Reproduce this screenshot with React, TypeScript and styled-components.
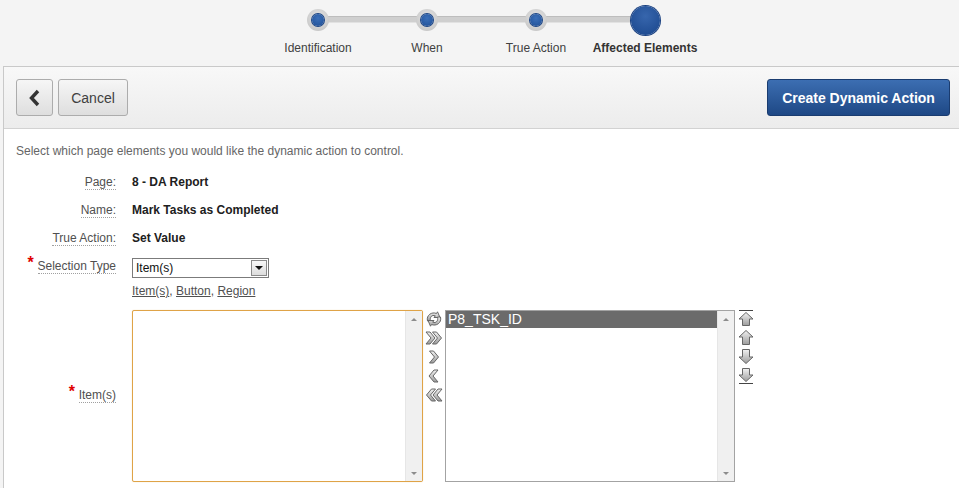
import React from "react";
import styled, { createGlobalStyle } from "styled-components";

const Global = createGlobalStyle`
  html, body { margin: 0; padding: 0; }
  body {
    background: #f4f4f4;
    font-family: "Liberation Sans", Arial, sans-serif;
    overflow: hidden;
    width: 959px;
    height: 488px;
  }
`;

const Page = styled.div`
  display: flex;
  flex-direction: column;
  width: 959px;
  height: 488px;
`;

const Wizard = styled.div`
  height: 66px;
  display: flex;
  justify-content: center;
  padding-left: 4px;
  box-sizing: border-box;
`;

const Steps = styled.div`
  position: relative;
  display: flex;
  padding-top: 5px;
`;

const Track = styled.div`
  position: absolute;
  left: 54px;
  right: 54px;
  top: 16px;
  height: 5px;
  background: #cfcfcf;
  border-top: 1px solid #bdbdbd;
  border-bottom: 1px solid #e2e2e2;
`;

const Step = styled.div`
  position: relative;
  width: 109px;
  display: flex;
  flex-direction: column;
  align-items: center;
`;

const DotHolder = styled.div`
  height: 30px;
  display: flex;
  align-items: center;
  justify-content: center;
`;

const SmallDot = styled.div`
  width: 22px;
  height: 22px;
  border-radius: 50%;
  background: radial-gradient(circle at 50% 40%, #e6e6e6 0%, #cbcbcb 70%, #bcbcbc 100%);
  display: flex;
  align-items: center;
  justify-content: center;
  &::after {
    content: "";
    width: 12px;
    height: 12px;
    border-radius: 50%;
    background: radial-gradient(circle at 50% 35%, #3b6fb8, #1f4f96);
    box-shadow: 0 0 0 1px #1b4485;
  }
`;

const BigDot = styled.div`
  width: 29px;
  height: 29px;
  border-radius: 50%;
  background: radial-gradient(circle at 50% 35%, #3766ad, #1f4c92 80%);
  box-shadow: 0 0 0 1px #1a4080;
`;

const StepLabel = styled.div<{ $active?: boolean }>`
  margin-top: 6px;
  font-size: 12px;
  color: ${(p) => (p.$active ? "#333" : "#404040")};
  font-weight: ${(p) => (p.$active ? "bold" : "normal")};
  white-space: nowrap;
`;

const Panel = styled.div`
  flex: 1;
  margin-left: 3px;
  border-left: 1px solid #c9c9c9;
  border-top: 1px solid #c9c9c9;
  background: #fff;
  display: flex;
  flex-direction: column;
`;

const Header = styled.div`
  height: 62px;
  box-sizing: border-box;
  background: linear-gradient(#f8f8f8, #ececec);
  border-bottom: 1px solid #d2d2d2;
  display: flex;
  align-items: center;
  padding: 0 9px 0 12px;
  gap: 5px;
`;

const GrayButton = styled.button<{ $w: number }>`
  height: 37px;
  width: ${(p) => p.$w}px;
  box-sizing: border-box;
  border: 1px solid #acacac;
  border-radius: 3px;
  background: linear-gradient(#f6f6f6, #dedede);
  font-family: "Liberation Sans", Arial, sans-serif;
  font-size: 14px;
  color: #404040;
  padding: 0;
  display: flex;
  align-items: center;
  justify-content: center;
`;

const Spacer = styled.div`
  flex: 1;
`;

const PrimaryButton = styled.button`
  height: 37px;
  width: 183px;
  box-sizing: border-box;
  border: 1px solid #1a3c70;
  border-radius: 3px;
  background: linear-gradient(#3c6eb2, #1e4885);
  color: #fff;
  font-family: "Liberation Sans", Arial, sans-serif;
  font-size: 14px;
  font-weight: bold;
  padding: 0;
`;

const Body = styled.div`
  padding: 15px 12px 0 12px;
`;

const Intro = styled.div`
  font-size: 12px;
  color: #666;
  line-height: 14px;
`;

const Form = styled.div`
  margin-top: 18px;
  display: grid;
  grid-template-columns: 100px auto;
  column-gap: 16px;
  align-items: start;
`;

const LabelCell = styled.div<{ $h?: number; $center?: boolean }>`
  height: ${(p) => p.$h ?? 28}px;
  display: flex;
  justify-content: flex-end;
  align-items: ${(p) => (p.$center ? "center" : "flex-start")};
`;

const Label = styled.span`
  position: relative;
  font-size: 12px;
  color: #505050;
  line-height: 13px;
  border-bottom: 1px dotted #a0a0a0;
`;

const Star = styled.span`
  position: absolute;
  left: -10px;
  top: -4px;
  color: #e00000;
  font-size: 16px;
  font-weight: bold;
`;

const Value = styled.div`
  height: 28px;
  font-size: 12px;
  font-weight: bold;
  color: #202020;
  line-height: 13px;
`;

const SelectCell = styled.div`
  height: 52px;
  margin-top: -2px;
  display: flex;
  flex-direction: column;
  gap: 6px;
`;

const SelectBox = styled.div`
  width: 137px;
  height: 20px;
  box-sizing: border-box;
  border: 1px solid #7b7b7b;
  background: #fff;
  display: flex;
  align-items: center;
  justify-content: space-between;
  padding: 0 1px 0 3px;
  font-size: 12px;
  color: #111;
`;

const DropBtn = styled.div`
  width: 16px;
  height: 16px;
  box-sizing: border-box;
  border: 1px solid #8a8a8a;
  background: linear-gradient(#f8f8f8, #dcdcdc);
  display: flex;
  align-items: center;
  justify-content: center;
  &::after {
    content: "";
    border-left: 4px solid transparent;
    border-right: 4px solid transparent;
    border-top: 4px solid #111;
  }
`;

const Links = styled.div`
  font-size: 12px;
  color: #505050;
  & a {
    color: #505050;
    text-decoration: underline;
  }
`;

const Shuttle = styled.div`
  display: flex;
  align-items: flex-start;
  gap: 2px;
`;

const ListBox = styled.div<{ $focus?: boolean }>`
  width: ${(p) => (p.$focus ? 291 : 290)}px;
  height: 172px;
  box-sizing: border-box;
  border: 1px solid ${(p) => (p.$focus ? "#dfa347" : "#a3a3a3")};
  border-radius: ${(p) => (p.$focus ? 2 : 0)}px;
  box-shadow: ${(p) => (p.$focus ? "0 0 1px #eccb8f" : "none")};
  background: #fff;
  display: flex;
`;

const Options = styled.div`
  flex: 1;
`;

const Option = styled.div<{ $sel?: boolean }>`
  height: 17px;
  line-height: 17px;
  padding-left: 2px;
  font-size: 14px;
  color: ${(p) => (p.$sel ? "#fff" : "#111")};
  background: ${(p) => (p.$sel ? "#6b6b6b" : "transparent")};
`;

const Scrollbar = styled.div`
  width: 16px;
  background: #f0f0f0;
  border-left: 1px solid #e6e6e6;
  display: flex;
  flex-direction: column;
  justify-content: space-between;
  align-items: center;
  padding: 7px 0 6px;
`;

const ArrowUp = styled.div`
  border-left: 3px solid transparent;
  border-right: 3px solid transparent;
  border-bottom: 3px solid #8c8c8c;
`;

const ArrowDown = styled.div`
  border-left: 3px solid transparent;
  border-right: 3px solid transparent;
  border-top: 3px solid #8c8c8c;
`;

const IconCol = styled.div`
  display: flex;
  flex-direction: column;
  gap: 3px;
  padding-top: 1px;
`;

const IconBtn = styled.div`
  width: 18px;
  height: 16px;
  display: flex;
  align-items: center;
  justify-content: center;
`;

const stroke = "#666";
const fill = "url(#gg)";

const Defs = () => (
  <svg width="0" height="0" style={{ position: "absolute" }}>
    <defs>
      <linearGradient id="gg" x1="0" y1="0" x2="0" y2="1">
        <stop offset="0" stopColor="#f2f2f2" />
        <stop offset="1" stopColor="#9c9c9c" />
      </linearGradient>
    </defs>
  </svg>
);

const Chev = ({ x, dir }: { x: number; dir: 1 | -1 }) => {
  const d =
    dir === 1
      ? `M${x} 2 L${x + 4} 2 L${x + 9} 8 L${x + 4} 14 L${x} 14 L${x + 5} 8 Z`
      : `M${x + 9} 2 L${x + 5} 2 L${x} 8 L${x + 5} 14 L${x + 9} 14 L${x + 4} 8 Z`;
  return <path d={d} fill={fill} stroke={stroke} strokeWidth="1" strokeLinejoin="round" />;
};

const IconRefresh = () => (
  <svg width="18" height="16" viewBox="0 0 18 16">
    <path d="M2.5 10 C1 4 7 0.5 11.5 2.5 L12.5 0.8 L15 6.5 L9 6.5 L10.3 4.8 C7 3.5 4.5 6 5.5 10 Z" fill={fill} stroke={stroke} strokeWidth="1" strokeLinejoin="round" />
    <path d="M15.5 6 C17 12 11 15.5 6.5 13.5 L5.5 15.2 L3 9.5 L9 9.5 L7.7 11.2 C11 12.5 13.5 10 12.5 6 Z" fill={fill} stroke={stroke} strokeWidth="1" strokeLinejoin="round" />
  </svg>
);

const IconDoubleRight = () => (
  <svg width="18" height="16" viewBox="0 0 18 16">
    <Chev x={1} dir={1} />
    <Chev x={7.5} dir={1} />
  </svg>
);
const IconRight = () => (
  <svg width="18" height="16" viewBox="0 0 18 16">
    <Chev x={4.5} dir={1} />
  </svg>
);
const IconLeft = () => (
  <svg width="18" height="16" viewBox="0 0 18 16">
    <Chev x={4} dir={-1} />
  </svg>
);
const IconDoubleLeft = () => (
  <svg width="18" height="16" viewBox="0 0 18 16">
    <Chev x={1.5} dir={-1} />
    <Chev x={8} dir={-1} />
  </svg>
);

const IconTop = () => (
  <svg width="16" height="17" viewBox="0 0 16 17">
    <line x1="1" y1="0.5" x2="15" y2="0.5" stroke="#444" strokeWidth="1" />
    <path d="M8 2.5 L15 9 L11.5 9 L11.5 15.5 L4.5 15.5 L4.5 9 L1 9 Z" fill={fill} stroke={stroke} strokeWidth="1" strokeLinejoin="round" />
  </svg>
);
const IconUp = () => (
  <svg width="16" height="17" viewBox="0 0 16 17">
    <path d="M8 1.5 L15 8 L11.5 8 L11.5 15.5 L4.5 15.5 L4.5 8 L1 8 Z" fill={fill} stroke={stroke} strokeWidth="1" strokeLinejoin="round" />
  </svg>
);
const IconDown = () => (
  <svg width="16" height="17" viewBox="0 0 16 17">
    <path d="M8 15.5 L15 9 L11.5 9 L11.5 1.5 L4.5 1.5 L4.5 9 L1 9 Z" fill={fill} stroke={stroke} strokeWidth="1" strokeLinejoin="round" />
  </svg>
);
const IconBottom = () => (
  <svg width="16" height="17" viewBox="0 0 16 17">
    <path d="M8 14.5 L15 8 L11.5 8 L11.5 1.5 L4.5 1.5 L4.5 8 L1 8 Z" fill={fill} stroke={stroke} strokeWidth="1" strokeLinejoin="round" />
    <line x1="1" y1="16.5" x2="15" y2="16.5" stroke="#444" strokeWidth="1" />
  </svg>
);

const BackIcon = () => (
  <svg width="14" height="18" viewBox="0 0 14 18">
    <path d="M10 2 L3.5 9 L10 16" fill="none" stroke="#333" strokeWidth="3.4" strokeLinejoin="miter" />
  </svg>
);

const RightIconCol = styled(IconCol)`
  gap: 2px;
  padding-top: 0;
`;

const RightIconBtn = styled(IconBtn)`
  width: 17px;
  height: 17px;
`;

const steps = [
  { label: "Identification" },
  { label: "When" },
  { label: "True Action" },
  { label: "Affected Elements", active: true },
];

export default function App() {
  return (
    <Page>
      <Global />
      <Defs />
      <Wizard>
        <Steps>
          <Track />
          {steps.map((s) => (
            <Step key={s.label}>
              <DotHolder>{s.active ? <BigDot /> : <SmallDot />}</DotHolder>
              <StepLabel $active={s.active}>{s.label}</StepLabel>
            </Step>
          ))}
        </Steps>
      </Wizard>
      <Panel>
        <Header>
          <GrayButton $w={37}>
            <BackIcon />
          </GrayButton>
          <GrayButton $w={70}>Cancel</GrayButton>
          <Spacer />
          <PrimaryButton>Create Dynamic Action</PrimaryButton>
        </Header>
        <Body>
          <Intro>Select which page elements you would like the dynamic action to control.</Intro>
          <Form>
            <LabelCell>
              <Label>Page:</Label>
            </LabelCell>
            <Value>8 - DA Report</Value>
            <LabelCell>
              <Label>Name:</Label>
            </LabelCell>
            <Value>Mark Tasks as Completed</Value>
            <LabelCell>
              <Label>True Action:</Label>
            </LabelCell>
            <Value>Set Value</Value>
            <LabelCell $h={50}>
              <Label>
                <Star>*</Star>Selection Type
              </Label>
            </LabelCell>
            <SelectCell>
              <SelectBox>
                <span>Item(s)</span>
                <DropBtn />
              </SelectBox>
              <Links>
                <a>Item(s)</a>, <a>Button</a>, <a>Region</a>
              </Links>
            </SelectCell>
            <LabelCell $h={172} $center>
              <Label>
                <Star>*</Star>Item(s)
              </Label>
            </LabelCell>
            <Shuttle>
              <ListBox $focus>
                <Options />
                <Scrollbar>
                  <ArrowUp />
                  <ArrowDown />
                </Scrollbar>
              </ListBox>
              <IconCol>
                <IconBtn><IconRefresh /></IconBtn>
                <IconBtn><IconDoubleRight /></IconBtn>
                <IconBtn><IconRight /></IconBtn>
                <IconBtn><IconLeft /></IconBtn>
                <IconBtn><IconDoubleLeft /></IconBtn>
              </IconCol>
              <ListBox>
                <Options>
                  <Option $sel>P8_TSK_ID</Option>
                </Options>
                <Scrollbar>
                  <ArrowUp />
                  <ArrowDown />
                </Scrollbar>
              </ListBox>
              <RightIconCol>
                <RightIconBtn><IconTop /></RightIconBtn>
                <RightIconBtn><IconUp /></RightIconBtn>
                <RightIconBtn><IconDown /></RightIconBtn>
                <RightIconBtn><IconBottom /></RightIconBtn>
              </RightIconCol>
            </Shuttle>
          </Form>
        </Body>
      </Panel>
    </Page>
  );
}
